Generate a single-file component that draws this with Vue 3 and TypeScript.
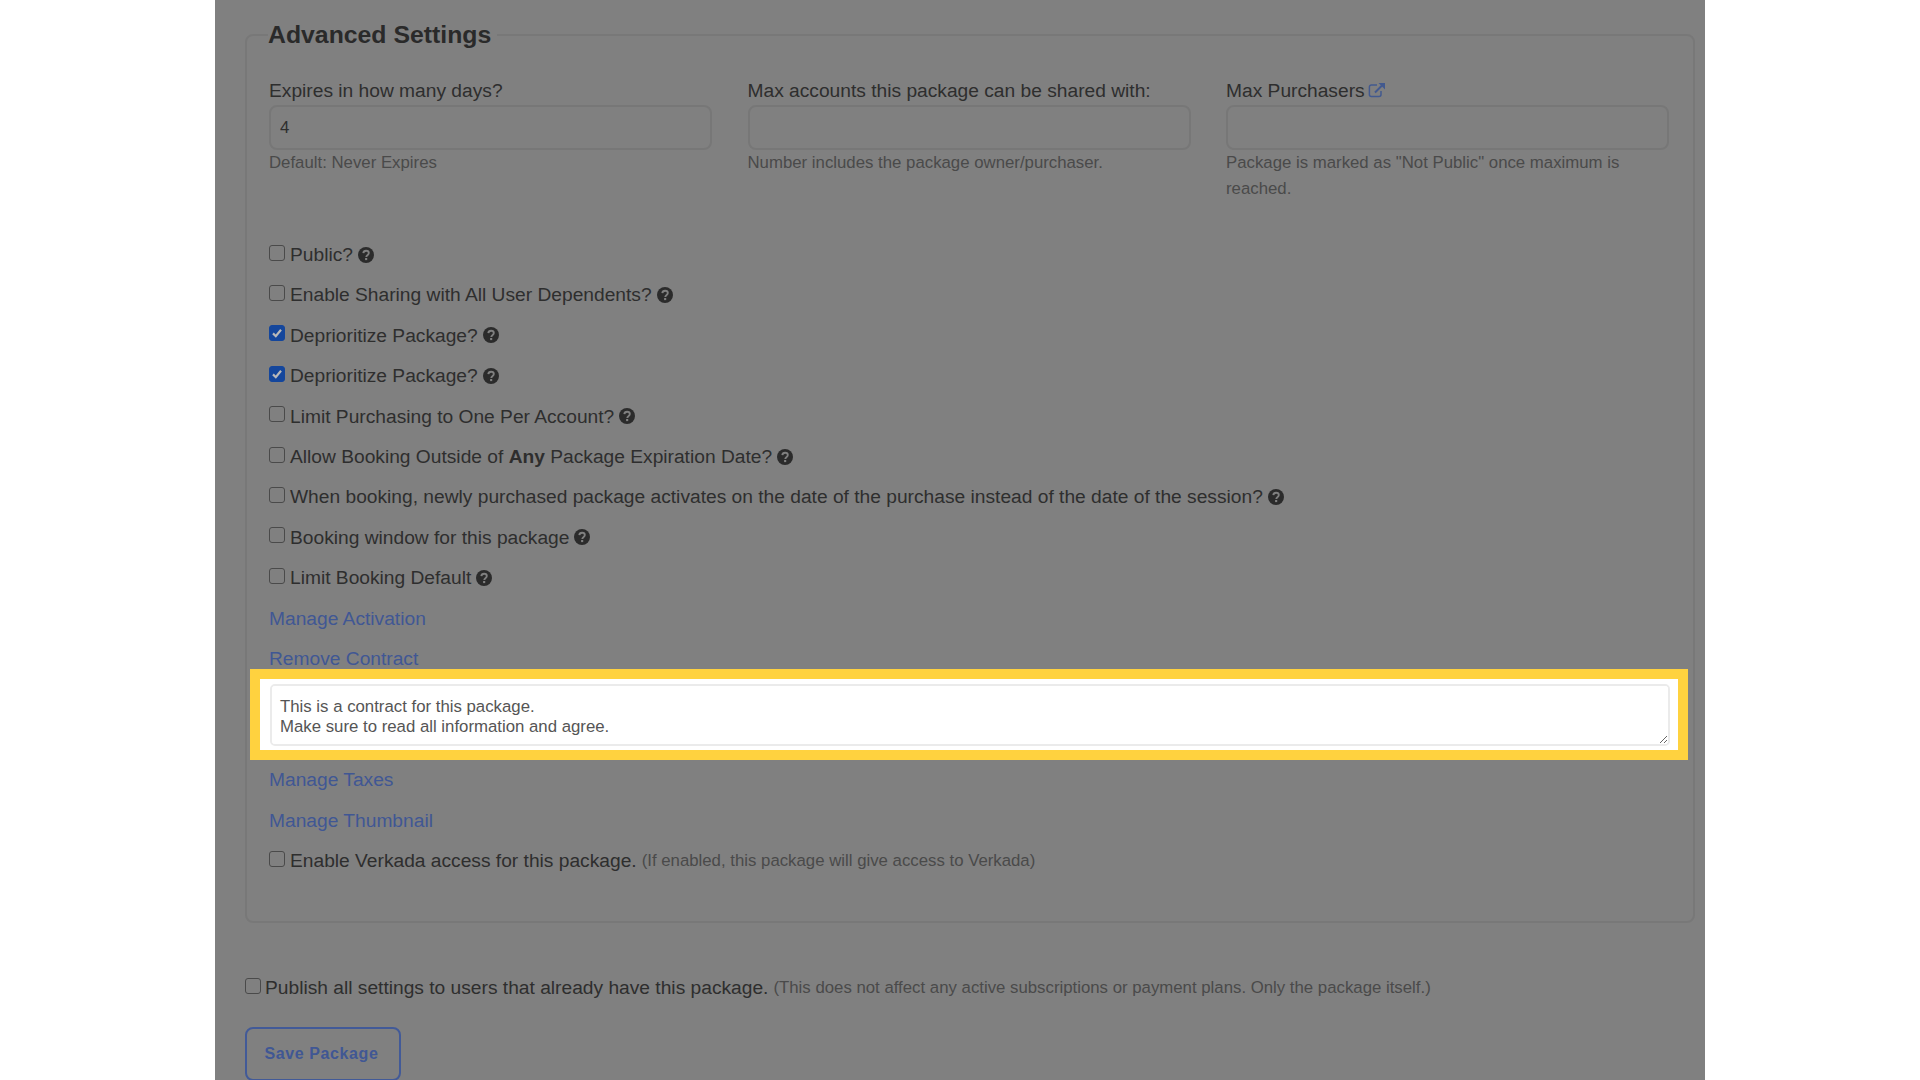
<script setup lang="ts">
interface Column { label: string; value: string; help: string; external?: boolean }
const columns: Column[] = [
  { label: 'Expires in how many days?', value: '4', help: 'Default: Never Expires' },
  { label: 'Max accounts this package can be shared with:', value: '', help: 'Number includes the package owner/purchaser.' },
  { label: 'Max Purchasers', value: '', help: 'Package is marked as "Not Public" once maximum is reached.', external: true },
]
interface Option { before: string; bold?: string; after?: string; checked?: boolean }
const options: Option[] = [
  { before: 'Public?' },
  { before: 'Enable Sharing with All User Dependents?' },
  { before: 'Deprioritize Package?', checked: true },
  { before: 'Deprioritize Package?', checked: true },
  { before: 'Limit Purchasing to One Per Account?' },
  { before: 'Allow Booking Outside of ', bold: 'Any', after: ' Package Expiration Date?' },
  { before: 'When booking, newly purchased package activates on the date of the purchase instead of the date of the session?' },
  { before: 'Booking window for this package' },
  { before: 'Limit Booking Default' },
]
const contract = 'This is a contract for this package.\nMake sure to read all information and agree.'
</script>

<template>
  <div class="page">
    <main class="panel">
      <fieldset class="settings">
        <legend>Advanced Settings</legend>
        <div class="columns">
          <div v-for="c in columns" :key="c.label" class="column">
            <label class="field-label">
              {{ c.label }}
              <svg v-if="c.external" class="external" viewBox="0 0 18 16" aria-hidden="true">
                <path d="M13 9v3.6A2 2 0 0 1 11 14.6H3.4a2 2 0 0 1-2-2V5a2 2 0 0 1 2-2H9" fill="none" stroke="currentColor" stroke-width="1.5" />
                <path d="M7 10.5 14 3.5" fill="none" stroke="currentColor" stroke-width="2" />
                <path d="M10.5 1h6.5v6.5z" fill="currentColor" />
              </svg>
            </label>
            <input class="text-input" type="text" :value="c.value" />
            <p class="help">{{ c.help }}</p>
          </div>
        </div>

        <div class="rows">
          <div v-for="(o, i) in options" :key="i" class="row">
            <span class="check" :class="{ on: o.checked }">
              <svg v-if="o.checked" viewBox="0 0 14 14" aria-hidden="true">
                <path d="M3 7.4 5.8 10.2 11 3.8" fill="none" stroke="#b9b9b9" stroke-width="2.2" />
              </svg>
            </span>
            <span class="row-text">{{ o.before }}<b v-if="o.bold">{{ o.bold }}</b>{{ o.after }}</span>
            <svg class="q" viewBox="0 0 16 16" aria-hidden="true">
              <circle cx="8" cy="8" r="8" fill="#2b2b2b" />
              <path d="M5.3 6.2C5.5 4.6 6.7 3.8 8.1 3.8c1.5 0 2.7 1 2.7 2.3 0 1.1-.7 1.6-1.4 2.1-.7.5-1.1.9-1.1 1.8" fill="none" stroke="#808080" stroke-width="1.9" />
              <rect x="7.1" y="11" width="2.1" height="2.1" fill="#808080" />
            </svg>
          </div>
          <a class="row link">Manage Activation</a>
          <a class="row link">Remove Contract</a>
          <div class="highlight">
            <textarea class="contract" :value="contract" readonly></textarea>
          </div>
          <a class="row link">Manage Taxes</a>
          <a class="row link">Manage Thumbnail</a>
          <div class="row">
            <span class="check"></span>
            <span class="row-text">Enable Verkada access for this package.</span>
            <small>(If enabled, this package will give access to Verkada)</small>
          </div>
        </div>
      </fieldset>

      <div class="row publish">
        <span class="check"></span>
        <span class="row-text">Publish all settings to users that already have this package.</span>
        <small>(This does not affect any active subscriptions or payment plans. Only the package itself.)</small>
      </div>
      <button class="save" type="button">Save Package</button>
    </main>
  </div>
</template>

<style scoped>
.page {
  height: 1080px;
  overflow: hidden;
  display: flex;
  justify-content: center;
  background: #fff;
  font-family: "Liberation Sans", Arial, sans-serif;
}
.panel {
  width: 1490px;
  height: 1080px;
  box-sizing: border-box;
  padding: 20px 10px 0 30px;
  background: #808080;
  color: #2e2e2e;
  filter: blur(0.6px);
}
.settings {
  margin: 0;
  padding: 28px 22px 0;
  height: 903px;
  box-sizing: border-box;
  border: 2px solid #787878;
  border-radius: 8px;
  min-width: 0;
}
legend {
  padding: 0 6px 0 0;
  margin-left: -1px;
  font-size: 24.8px;
  line-height: 30px;
  font-weight: 700;
  color: #2a2a2a;
}
.columns {
  display: grid;
  grid-template-columns: repeat(3, 443px);
  column-gap: 35.5px;
  height: 164px;
}
.field-label {
  display: block;
  font-size: 19.2px;
  line-height: 26px;
  color: #2e2e2e;
}
.external {
  width: 18px;
  height: 16px;
  margin-left: -2px;
  color: #42598f;
  vertical-align: -1px;
}
.text-input {
  display: block;
  width: 100%;
  height: 45px;
  box-sizing: border-box;
  margin-top: 1px;
  padding: 1px 9px 0;
  border: 2px solid #777;
  border-radius: 8px;
  background: #808080;
  font: 16.8px "Liberation Sans", Arial, sans-serif;
  color: #2e2e2e;
  outline: none;
}
.help {
  margin: 0;
  font-size: 16.8px;
  line-height: 25.6px;
  color: #4a4a4a;
}
.rows {
  display: flex;
  flex-direction: column;
  gap: 15px;
}
.row {
  display: flex;
  align-items: center;
  height: 25.4px;
  font-size: 19.2px;
  line-height: 25.4px;
  white-space: pre;
}
.row-text b { font-weight: 700; }
.check {
  width: 16px;
  height: 16px;
  box-sizing: border-box;
  flex: none;
  margin: -4px 5px 0 0;
  border: 1.5px solid #4a4a4a;
  border-radius: 3px;
  display: flex;
}
.check.on {
  background: #14469c;
  border-color: #14469c;
}
.check svg { width: 100%; height: 100%; }
.q {
  width: 16px;
  height: 16px;
  margin-left: 5px;
  flex: none;
}
.link {
  color: #405794;
  cursor: pointer;
}
small {
  margin-left: 5px;
  font-size: 16.8px;
  color: #4a4a4a;
}
.highlight {
  margin: -17px -17px -8px -19.5px;
  padding: 5px 8px 4px 10.5px;
  height: 91px;
  box-sizing: border-box;
  border: 10px solid #ffd23f;
  background: #fff;
  display: flex;
}
.contract {
  flex: 1;
  margin: 0;
  padding: 11px 8px;
  box-sizing: border-box;
  border: 2px solid #ebebeb;
  border-radius: 5px;
  font: 16.8px/20px "Liberation Sans", Arial, sans-serif;
  color: #555;
  background: #fff;
  outline: none;
}
.publish { margin-top: 52px; }
.publish .check { margin-right: 4px; }
.save {
  display: block;
  margin-top: 27px;
  width: 156px;
  height: 54px;
  padding: 0 0 0 17.5px;
  text-align: left;
  border: 2.5px solid #425a98;
  border-radius: 8px;
  background: transparent;
  font: 700 16px "Liberation Sans", Arial, sans-serif;
  letter-spacing: .6px;
  color: #405794;
}
</style>

<style>
html, body { overflow: hidden; background: #fff; }
</style>
